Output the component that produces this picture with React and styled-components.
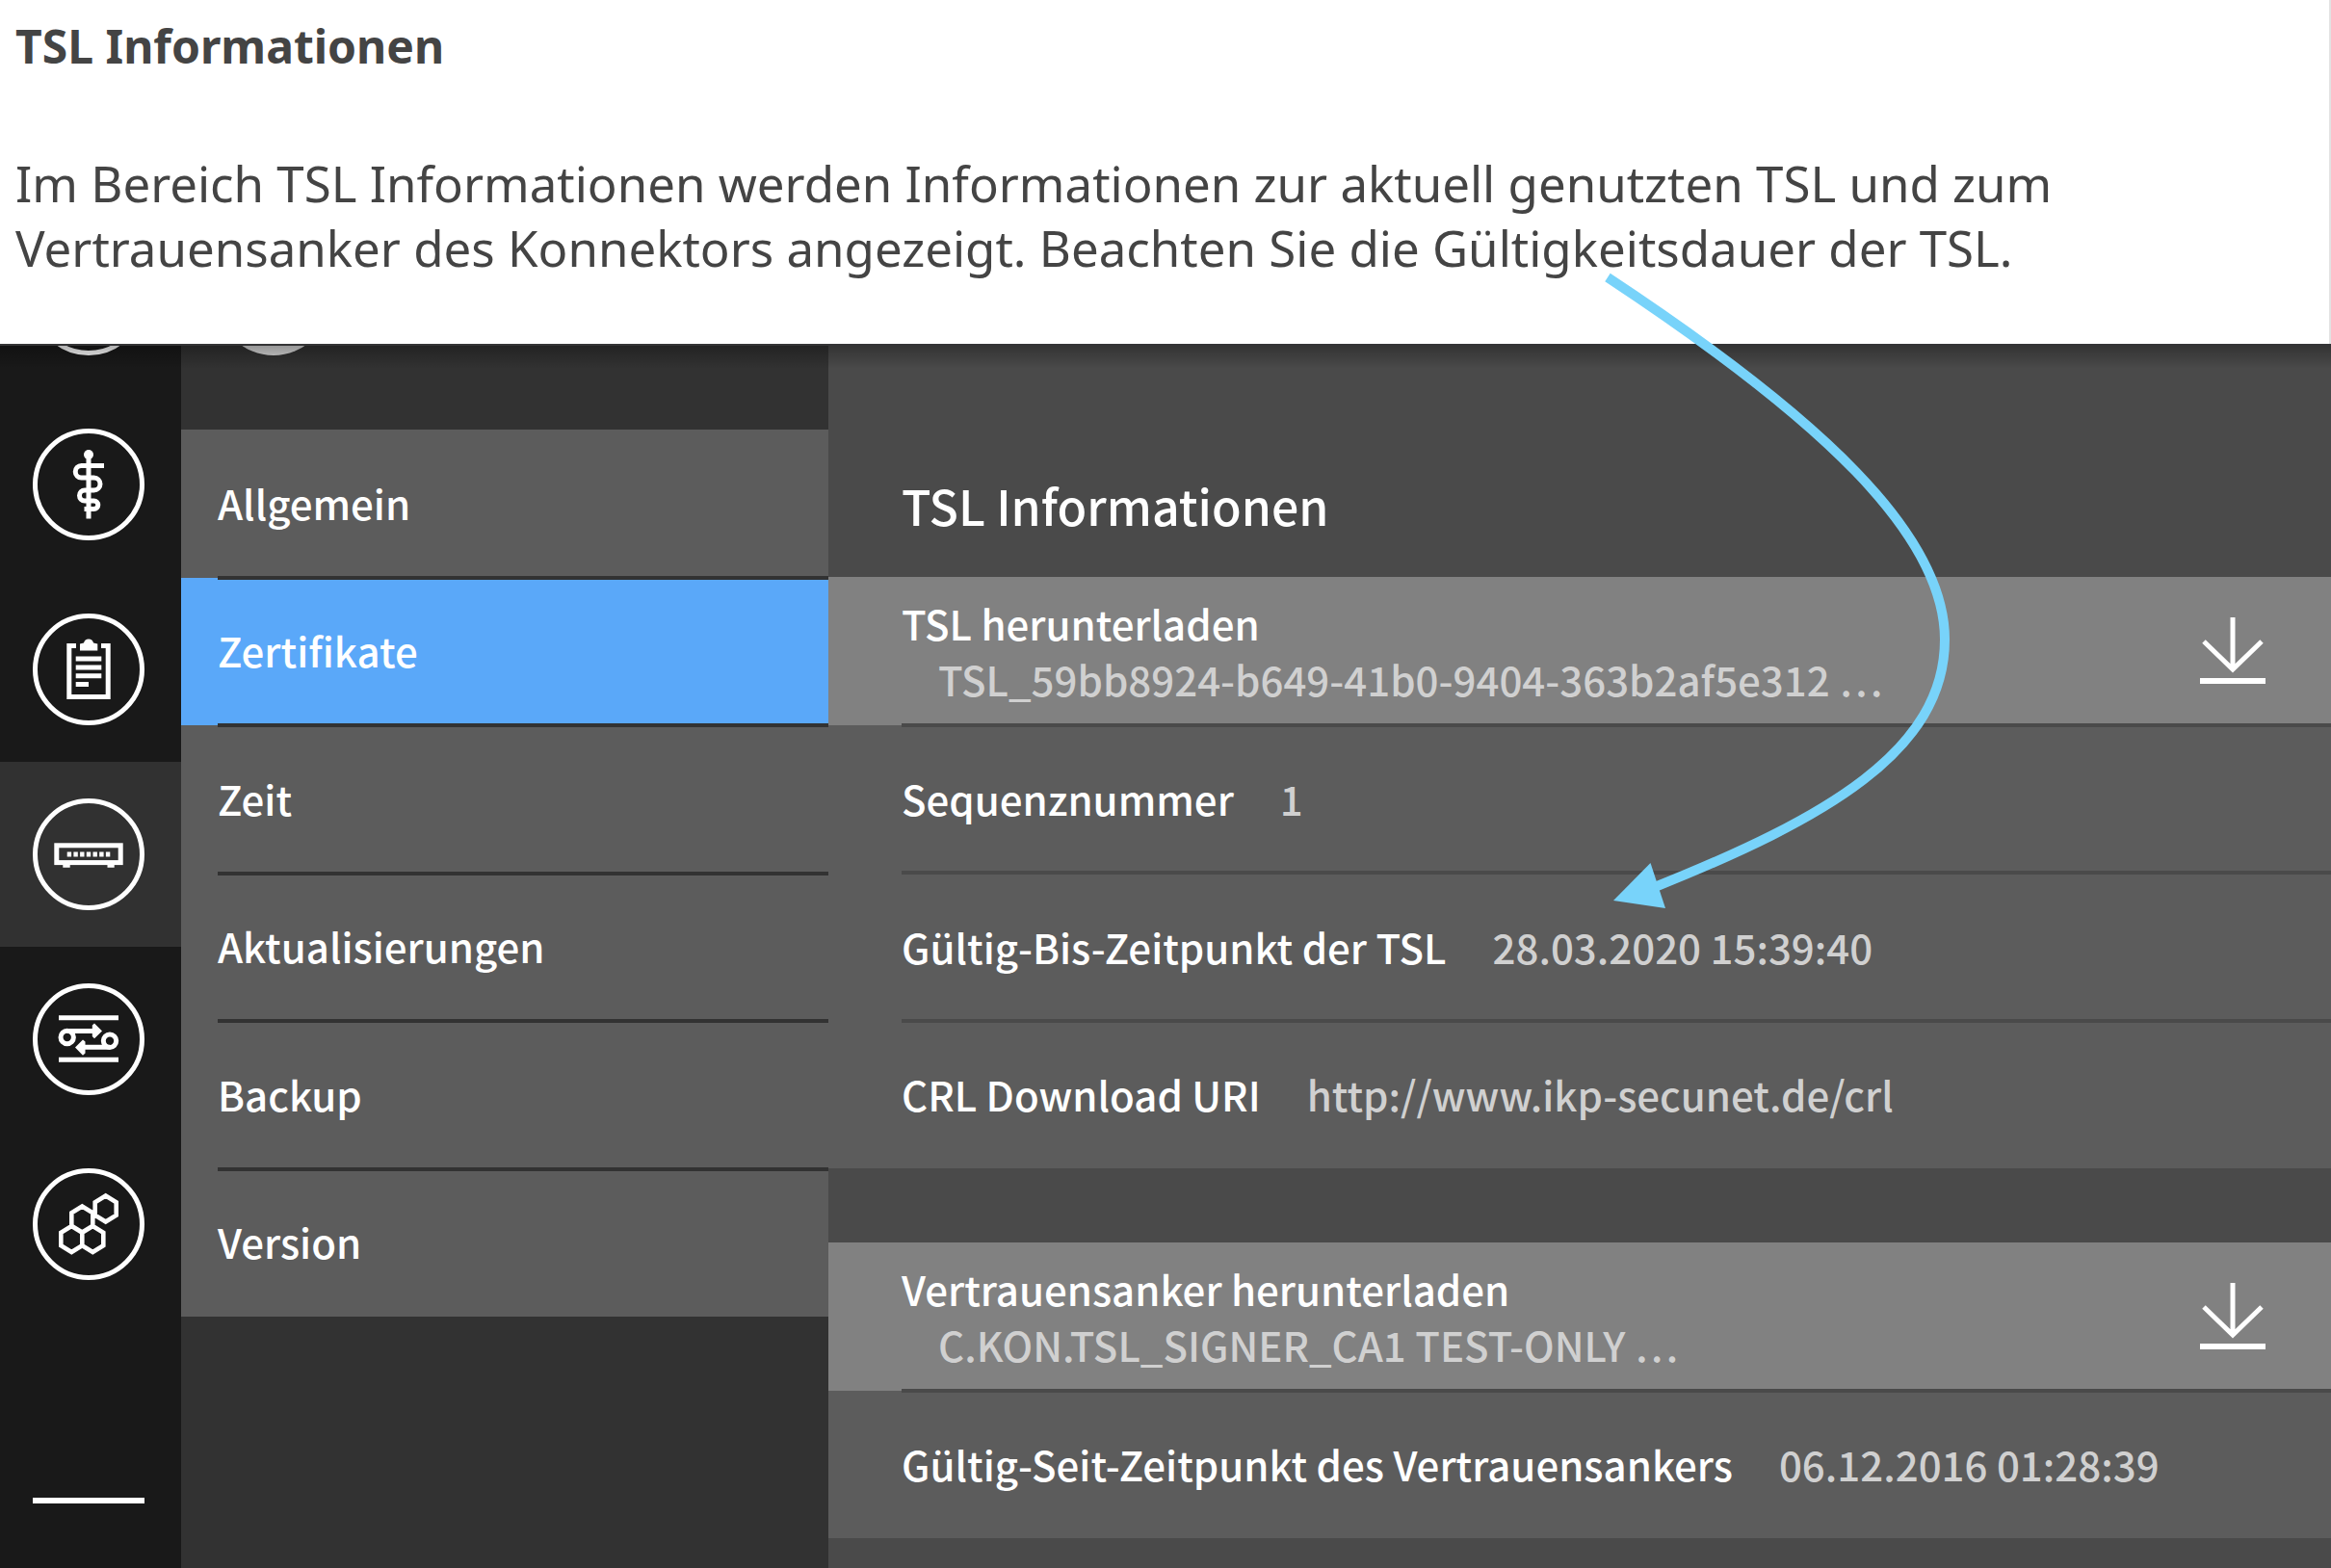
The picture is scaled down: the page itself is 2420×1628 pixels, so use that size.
import React from "react";
import styled, { createGlobalStyle } from "styled-components";

const color = {
  rail: "#191919",
  railActive: "#313131",
  sidebar: "#323232",
  row: "#5c5c5c",
  accent: "#5aa8f9",
  content: "#4a4a4a",
  download: "#818181",
  value: "#d0d0d0",
  arrow: "#78d3fa",
};

const GlobalStyle = createGlobalStyle`
  * { box-sizing: border-box; }
  body { margin: 0; background: #fff; }
  h1, h2, p, ul, dl, dd { margin: 0; padding: 0; }
  ul { list-style: none; }
`;

const Page = styled.div`
  position: relative;
  display: flex;
  flex-direction: column;
  min-height: 100vh;
  overflow: hidden;
`;

const Intro = styled.header`
  padding: 14px 16px 66px;
  border-right: 2px solid #e2e2e2;
  color: #444;
  font-family: "Noto Sans", "Open Sans", sans-serif;
  font-size: 51px;
  line-height: 67px;
`;

const IntroTitle = styled.h1`
  margin-bottom: 76px;
  font-size: 48px;
  font-weight: 700;
`;

const Console = styled.div`
  position: relative;
  flex: 1;
  display: flex;
  overflow: hidden;
  color: #fff;
  font-family: "Noto Sans CJK SC", "Noto Sans", sans-serif;
  font-size: 42px;
  line-height: 58px;

  &::before {
    content: "";
    position: absolute;
    z-index: 2;
    inset: 0 0 auto;
    height: 24px;
    border-top: 2px solid #343436;
    background: linear-gradient(rgba(0, 0, 0, 0.3), rgba(0, 0, 0, 0));
  }
`;

const Rail = styled.nav`
  flex: none;
  width: 188px;
  display: flex;
  flex-direction: column;
  align-items: stretch;
  background: ${color.rail};
`;

const RailButton = styled.button`
  flex: none;
  display: flex;
  align-items: flex-end;
  height: ${(p) => (p.$clipped ? 50 : 192)}px;
  padding: 0 34px 38px;
  border: 0;
  background: ${(p) => (p.$active ? color.railActive : "transparent")};
  cursor: pointer;
`;

const RailSvg = styled.svg`
  flex: none;
  display: block;
  width: 116px;
  height: 116px;
  fill: none;
  stroke: #fff;
  stroke-width: 5;
`;

const RailRule = styled.hr`
  width: 116px;
  height: 6px;
  margin: 188px 0 0 34px;
  border: 0;
  background: #fff;
`;

const Sidebar = styled.aside`
  flex: none;
  width: 672px;
  background: ${color.sidebar};
`;

const SidebarTop = styled.div`
  display: flex;
  align-items: flex-end;
  height: 89px;
  padding: 0 38px 77px;
`;

const Avatar = styled.span`
  flex: none;
  width: 116px;
  height: 116px;
  border-radius: 50%;
  background: #d8d8d8;
`;

const rowGrid = `
  display: grid;
  grid-auto-rows: 1fr;
`;

const Menu = styled.ul`
  ${rowGrid}
  height: 921px;
`;

const MenuItem = styled.li`
  position: relative;
  display: grid;

  &:not(:last-child)::after {
    content: "";
    position: absolute;
    z-index: 1;
    inset: auto 0 -2px 38px;
    height: 4px;
    background: ${color.sidebar};
  }
`;

const MenuLink = styled.a`
  display: flex;
  align-items: center;
  padding: 0 0 2px 38px;
  background: ${(p) => (p.$active ? color.accent : color.row)};
  color: #fff;
  font-weight: 500;
  text-decoration: none;
`;

const Content = styled.main`
  flex: 1;
  min-width: 0;
  background: ${color.content};
`;

const ContentTitle = styled.h2`
  display: flex;
  align-items: flex-end;
  height: 242px;
  padding: 0 76px 40px;
  font-size: 50px;
  font-weight: 500;
  line-height: 70px;
`;

const Group = styled.dl`
  ${rowGrid}
  height: ${(p) => (p.$rows * 307) / 2}px;
  margin-bottom: 77px;
`;

const Row = styled.div`
  position: relative;
  display: flex;
  align-items: center;
  justify-content: ${(p) => (p.$download ? "space-between" : "flex-start")};
  gap: 48px;
  padding: 0 68px 0 76px;
  background: ${(p) => (p.$download ? color.download : color.row)};
  white-space: nowrap;

  &:not(:last-child)::after {
    content: "";
    position: absolute;
    z-index: 1;
    inset: auto 0 -2px 76px;
    height: 4px;
    background: ${color.content};
  }
`;

const Label = styled.dt`
  font-weight: 500;
`;

const Value = styled.dd`
  padding-left: ${(p) => (p.$indented ? 38 : 0)}px;
  color: ${color.value};
  font-weight: 500;
`;

const DownloadText = styled.div`
  display: flex;
  flex-direction: column;
`;

const DownloadButton = styled.button`
  padding: 0;
  border: 0;
  background: none;
  cursor: pointer;
`;

const DownloadSvg = styled.svg`
  display: block;
  width: 68px;
  height: 72px;
  fill: none;
  stroke: #fff;
  stroke-width: 5;
`;

const Pointer = styled.svg`
  position: absolute;
  z-index: 3;
  left: 1660px;
  top: 280px;
  width: 370px;
  height: 670px;
  pointer-events: none;
`;

const hexagon = (x, y) =>
  `M${x} ${y - 13.5}l11 6.75v13.5l-11 6.75l-11 -6.75v-13.5z`;

const glyphs = {
  staff: (
    <>
      <circle cx="58" cy="27" r="5" fill="#fff" stroke="none" />
      <path d="M58 27V93.5M74 38.5H50.5a6.25 6.25 0 0 0 0 12.5H63.5a6.5 6.5 0 0 1 0 13H54a5.5 5.5 0 0 0 0 11H63.5a4.3 4.3 0 0 1 0 8.6H53.5" />
    </>
  ),
  clipboard: (
    <>
      <path d="M45 33.5H37.8V86.5H78.2V33.5H71M44.7 47H71.3M44.7 56H71.3M44.7 64.7H71.3M44.7 73.4H58" />
      <path d="M49 38.5V31.5L53 30.5Q54 26.5 58 26.5T63 30.5L67.3 31.5V38.5Z" fill="#fff" stroke="none" />
    </>
  ),
  box: (
    <>
      <rect x="24.8" y="48.8" width="66.4" height="17.8" />
      <path d="M35.7 58H81" strokeDasharray="4.4 2.3" />
      <path d="M31.3 70.2H38.7M77.5 70.2H84.7" strokeWidth="3" />
    </>
  ),
  exchange: (
    <>
      <path d="M27 35.7H89M27 79.3H89M35.7 49.5H64M80 66.3H53" />
      <circle cx="35.7" cy="56" r="6.7" />
      <circle cx="80" cy="59.7" r="6.7" />
      <path d="M61.8 43.5L64 41.4L72 49.4L64 57.3L61.8 55ZM54.5 60.5L52 58.5L44 66.5L52 74.7L54.5 72.5Z" fill="#fff" stroke="none" />
    </>
  ),
  cells: (
    <path
      strokeWidth="4.6"
      d={hexagon(75.7, 42) + hexagon(51.3, 53) + hexagon(40.3, 73.5) + hexagon(62.3, 73.5)}
    />
  ),
};

const RailIcon = ({ name }) => (
  <RailSvg viewBox="0 0 116 116" aria-hidden="true">
    <circle cx="58" cy="58" r="55.5" />
    {glyphs[name]}
  </RailSvg>
);

const railItems = [
  { label: "Start", clipped: true },
  { label: "Praxis", icon: "staff" },
  { label: "Protokoll", icon: "clipboard" },
  { label: "System", icon: "box", active: true },
  { label: "Netzwerk", icon: "exchange" },
  { label: "Module", icon: "cells" },
];

const menuItems = ["Allgemein", "Zertifikate", "Zeit", "Aktualisierungen", "Backup", "Version"];

const groups = [
  [
    { label: "TSL herunterladen", value: "TSL_59bb8924-b649-41b0-9404-363b2af5e312 …", download: true },
    { label: "Sequenznummer", value: "1" },
    { label: "Gültig-Bis-Zeitpunkt der TSL", value: "28.03.2020 15:39:40" },
    { label: "CRL Download URI", value: "http://www.ikp-secunet.de/crl" },
  ],
  [
    { label: "Vertrauensanker herunterladen", value: "C.KON.TSL_SIGNER_CA1 TEST-ONLY …", download: true },
    { label: "Gültig-Seit-Zeitpunkt des Vertrauensankers", value: "06.12.2016 01:28:39" },
  ],
];

const DownloadRow = ({ label, value }) => (
  <Row $download>
    <DownloadText>
      <Label>{label}</Label>
      <Value $indented>{value}</Value>
    </DownloadText>
    <DownloadButton type="button" aria-label={label}>
      <DownloadSvg viewBox="0 0 68 72" aria-hidden="true">
        <path d="M34 1V55M4 26L34 55L64 26" />
        <path d="M0 67H68" strokeWidth="6" />
      </DownloadSvg>
    </DownloadButton>
  </Row>
);

export default function App() {
  return (
    <Page>
      <GlobalStyle />
      <Intro>
        <IntroTitle>TSL Informationen</IntroTitle>
        <p>
          Im Bereich TSL Informationen werden Informationen zur aktuell genutzten TSL und zum
          <br />
          Vertrauensanker des Konnektors angezeigt. Beachten Sie die Gültigkeitsdauer der TSL.
        </p>
      </Intro>
      <Console>
        <Rail aria-label="Bereiche">
          {railItems.map((item) => (
            <RailButton
              key={item.label}
              type="button"
              aria-label={item.label}
              $clipped={item.clipped}
              $active={item.active}
            >
              <RailIcon name={item.icon} />
            </RailButton>
          ))}
          <RailRule />
        </Rail>
        <Sidebar>
          <SidebarTop>
            <Avatar />
          </SidebarTop>
          <Menu>
            {menuItems.map((label) => (
              <MenuItem key={label}>
                <MenuLink href="#" $active={label === "Zertifikate"}>
                  {label}
                </MenuLink>
              </MenuItem>
            ))}
          </Menu>
        </Sidebar>
        <Content>
          <ContentTitle>TSL Informationen</ContentTitle>
          {groups.map((rows) => (
            <Group key={rows[0].label} $rows={rows.length}>
              {rows.map((row) =>
                row.download ? (
                  <DownloadRow key={row.label} {...row} />
                ) : (
                  <Row key={row.label}>
                    <Label>{row.label}</Label>
                    <Value>{row.value}</Value>
                  </Row>
                )
              )}
            </Group>
          ))}
        </Content>
      </Console>
      <Pointer viewBox="1660 280 370 670" aria-hidden="true">
        <path
          d="M1669 288C1890 434 2019 555 2019 664C2019 780 1895 850 1718 921"
          fill="none"
          stroke={color.arrow}
          strokeWidth="10"
        />
        <path d="M1675 935L1713.5 896L1729 943Z" fill={color.arrow} />
      </Pointer>
    </Page>
  );
}
